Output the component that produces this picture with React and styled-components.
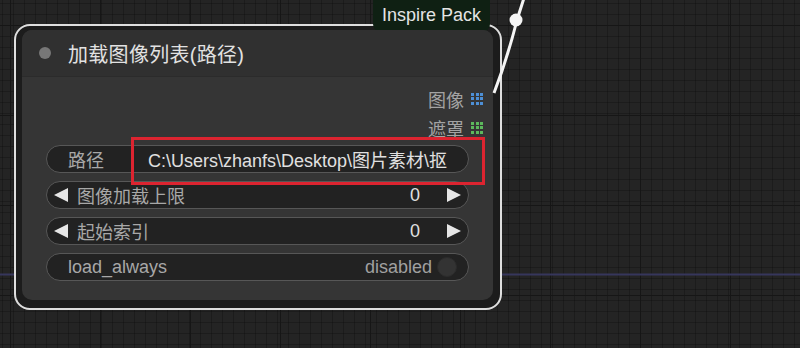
import styled, { createGlobalStyle } from 'styled-components';

const GlobalStyle = createGlobalStyle`
  html, body {
    margin: 0;
    padding: 0;
    background: #222;
  }
  * { box-sizing: border-box; }
`;

const FONT = `"Liberation Sans", "Noto Sans CJK SC", sans-serif`;

const Canvas = styled.div`
  position: relative;
  width: 800px;
  height: 348px;
  overflow: hidden;
  padding: 24px 0 0 14px;
  font-family: ${FONT};
  background-color: #242424;
  background-image:
    linear-gradient(#161616 1px, transparent 1px),
    linear-gradient(90deg, #161616 1px, transparent 1px),
    linear-gradient(rgba(0, 0, 0, 0.22) 1px, transparent 1px),
    linear-gradient(90deg, rgba(0, 0, 0, 0.22) 1px, transparent 1px);
  background-size: 90px 90px, 90px 90px, 11px 11px, 11px 11px;
  background-position: 0 25px, 10px 0, 0 3px, 2px 0;
`;

const Wires = styled.svg`
  position: absolute;
  inset: 0;
  z-index: ${(p) => (p.$front ? 3 : 0)};
  pointer-events: none;
`;

/* selection outline around the node */
const Frame = styled.div`
  position: relative;
  z-index: 1;
  width: 488px;
  padding: 4px 7px 8px 6px;
  border: 2px solid #dedede;
  border-radius: 16px;
  background: #1c1c1c;
`;

const Node = styled.div`
  position: relative;
  width: 471px;
  height: 270px;
  border-radius: 10px;
  background: #353535;
  display: flex;
  flex-direction: column;
`;

const Badge = styled.div`
  position: absolute;
  top: -26px;
  left: 357px;
  width: 117px;
  height: 32px;
  border-radius: 0 0 8px 8px;
  background: #0f2013;
  color: #e4e4e4;
  font-size: 18px;
  display: flex;
  align-items: center;
  justify-content: center;
  padding-bottom: 1px;
`;

const TitleBar = styled.div`
  height: 47px;
  display: flex;
  align-items: center;
  gap: 17px;
  padding-left: 17px;
  background: #303030;
  border-radius: 10px 10px 0 0;
  border-bottom: 1px solid #2b2b2b;
`;

const Dot = styled.span`
  width: 12px;
  height: 12px;
  border-radius: 50%;
  background: #777;
`;

const Title = styled.span`
  color: #e2e2e2;
  font-size: 20px;
  letter-spacing: 0.3px;
`;

const Outputs = styled.div`
  display: flex;
  flex-direction: column;
  align-items: flex-end;
  padding: 7px 10px 3px 0;
`;

const OutputRow = styled.div`
  height: 29px;
  display: flex;
  align-items: center;
  gap: 7px;
  color: #a3a3a3;
  font-size: 18px;
`;

const SlotGrid = styled.span`
  width: 12px;
  height: 12px;
  display: grid;
  grid-template-columns: repeat(3, 3px);
  grid-template-rows: repeat(3, 3px);
  gap: 1.5px;

  & > i {
    background: ${(p) => p.$color};
  }
`;

const Widgets = styled.div`
  display: flex;
  flex-direction: column;
  gap: 8px;
  padding: 0 24px;
`;

const WidgetRow = styled.div`
  height: 28px;
  border-radius: 14px;
  background: #222;
  border: 1px solid #575757;
  display: flex;
  align-items: center;
  padding: 0 ${(p) => p.$pad}px;
  font-size: 18px;
  color: #a8a8a8;
  white-space: nowrap;
  overflow: hidden;
`;

const Label = styled.span`
  flex: 1;
  padding-left: ${(p) => p.$indent || 0}px;
`;

const Value = styled.span`
  color: ${(p) => (p.$dim ? '#a0a0a0' : '#e0e0e0')};
`;

const Arrow = styled.span`
  width: 0;
  height: 0;
  border-top: 7px solid transparent;
  border-bottom: 7px solid transparent;
  ${(p) => (p.$dir === 'left'
    ? 'border-right: 14px solid #e6e6e6; margin-right: 9px;'
    : 'border-left: 14px solid #e6e6e6; margin-left: 27px;')}
`;

const Toggle = styled.span`
  width: 20px;
  height: 20px;
  border-radius: 50%;
  background: #333;
  border: 1px solid #2c2c2c;
  margin-left: 5px;
`;

const Highlight = styled.div`
  position: absolute;
  left: 109px;
  top: 107px;
  width: 354px;
  height: 48px;
  border: 3px solid #dc2430;
  pointer-events: none;
`;

const Slot = ({ label, color }) => (
  <OutputRow>
    {label}
    <SlotGrid $color={color}>
      {Array.from({ length: 9 }).map((_, i) => <i key={i} />)}
    </SlotGrid>
  </OutputRow>
);

const NumberWidget = ({ label, value }) => (
  <WidgetRow $pad={7}>
    <Arrow $dir="left" />
    <Label>{label}</Label>
    <Value>{value}</Value>
    <Arrow $dir="right" />
  </WidgetRow>
);

export default function App() {
  return (
    <Canvas>
      <GlobalStyle />
      <Wires width="800" height="348">
        <line x1="0" y1="274.5" x2="800" y2="274.5" stroke="#36365c" strokeWidth="2" />
      </Wires>
      <Frame>
        <Badge>Inspire Pack</Badge>
        <Node>
          <TitleBar>
            <Dot />
            <Title>加载图像列表(路径)</Title>
          </TitleBar>
          <Outputs>
            <Slot label="图像" color="#4d8fd6" />
            <Slot label="遮罩" color="#5cb85c" />
          </Outputs>
          <Widgets>
            <WidgetRow $pad={21}>
              <Label>路径</Label>
              <Value>C:\Users\zhanfs\Desktop\图片素材\抠</Value>
            </WidgetRow>
            <NumberWidget label="图像加载上限" value="0" />
            <NumberWidget label="起始索引" value="0" />
            <WidgetRow $pad={11}>
              <Label $indent={10}>load_always</Label>
              <Value $dim>disabled</Value>
              <Toggle />
            </WidgetRow>
          </Widgets>
          <Highlight />
        </Node>
      </Frame>
      <Wires $front width="800" height="348">
        <path d="M524,-2 L517,20 C512,40 506,62 494,93" stroke="#f4f4f4" strokeWidth="3" fill="none" />
        <circle cx="516" cy="20" r="6.5" fill="#f4f4f4" />
      </Wires>
    </Canvas>
  );
}
